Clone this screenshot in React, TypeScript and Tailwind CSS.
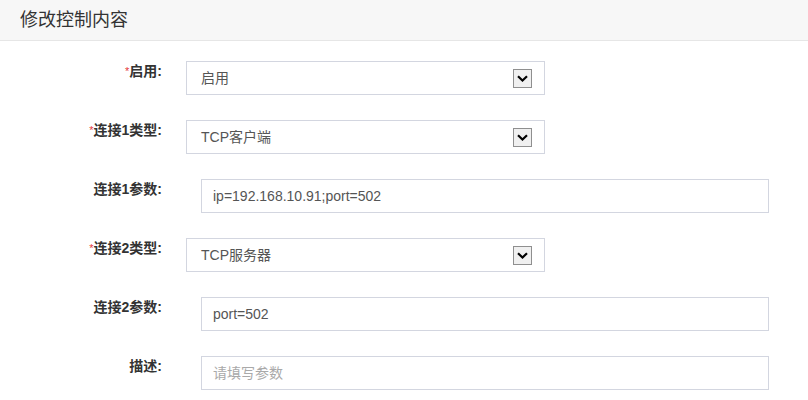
import React from "react";

const font = { fontFamily: '"Liberation Sans", "Noto Sans CJK SC", sans-serif' };

function Label({ text, required }: { text: string; required?: boolean }) {
  return (
    <div className="w-[162px] shrink-0 text-right text-[14px] font-bold leading-[20px] text-[#333]">
      {required && <span className="text-[#e4393c] text-[11px] font-normal align-top">*</span>}
      {text}:
    </div>
  );
}

function Select({ value }: { value: string }) {
  return (
    <div className="ml-[24px] w-[359px] h-[34px] border border-[#d3d6e0] bg-white flex items-center pl-[14px] pr-[12px]">
      <span className="flex-1 text-[14px] text-[#555]">{value}</span>
      <div className="w-[19px] h-[19px] border border-[#8f8f8f] bg-[#f0f0f0] flex items-center justify-center">
        <svg width="11" height="7" viewBox="0 0 11 7">
          <path d="M1 1.2 L5.5 5.5 L10 1.2" fill="none" stroke="#000" strokeWidth="2.2" />
        </svg>
      </div>
    </div>
  );
}

function Input({ value, placeholder }: { value?: string; placeholder?: string }) {
  return (
    <div className="ml-[39px] w-[568px] h-[34px] border border-[#d3d6e0] bg-white flex items-center px-[11px]">
      {value ? (
        <span className="text-[14px] text-[#555]">{value}</span>
      ) : (
        <span className="text-[14px] text-[#a9a9a9]">{placeholder}</span>
      )}
    </div>
  );
}

function Row({ children }: { children: React.ReactNode }) {
  return <div className="flex items-start">{children}</div>;
}

export default function App() {
  return (
    <div className="w-[808px] h-[400px] bg-white overflow-hidden" style={font}>
      <div className="h-[41px] bg-[#f7f7f7] border-b border-[#e6e6e6] flex items-center pl-[20px]">
        <span className="text-[18px] text-[#333]">修改控制内容</span>
      </div>
      <div className="pt-[20px] flex flex-col gap-[25px]">
        <Row>
          <Label text="启用" required />
          <Select value="启用" />
        </Row>
        <Row>
          <Label text="连接1类型" required />
          <Select value="TCP客户端" />
        </Row>
        <Row>
          <Label text="连接1参数" />
          <Input value="ip=192.168.10.91;port=502" />
        </Row>
        <Row>
          <Label text="连接2类型" required />
          <Select value="TCP服务器" />
        </Row>
        <Row>
          <Label text="连接2参数" />
          <Input value="port=502" />
        </Row>
        <Row>
          <Label text="描述" />
          <Input placeholder="请填写参数" />
        </Row>
      </div>
    </div>
  );
}
